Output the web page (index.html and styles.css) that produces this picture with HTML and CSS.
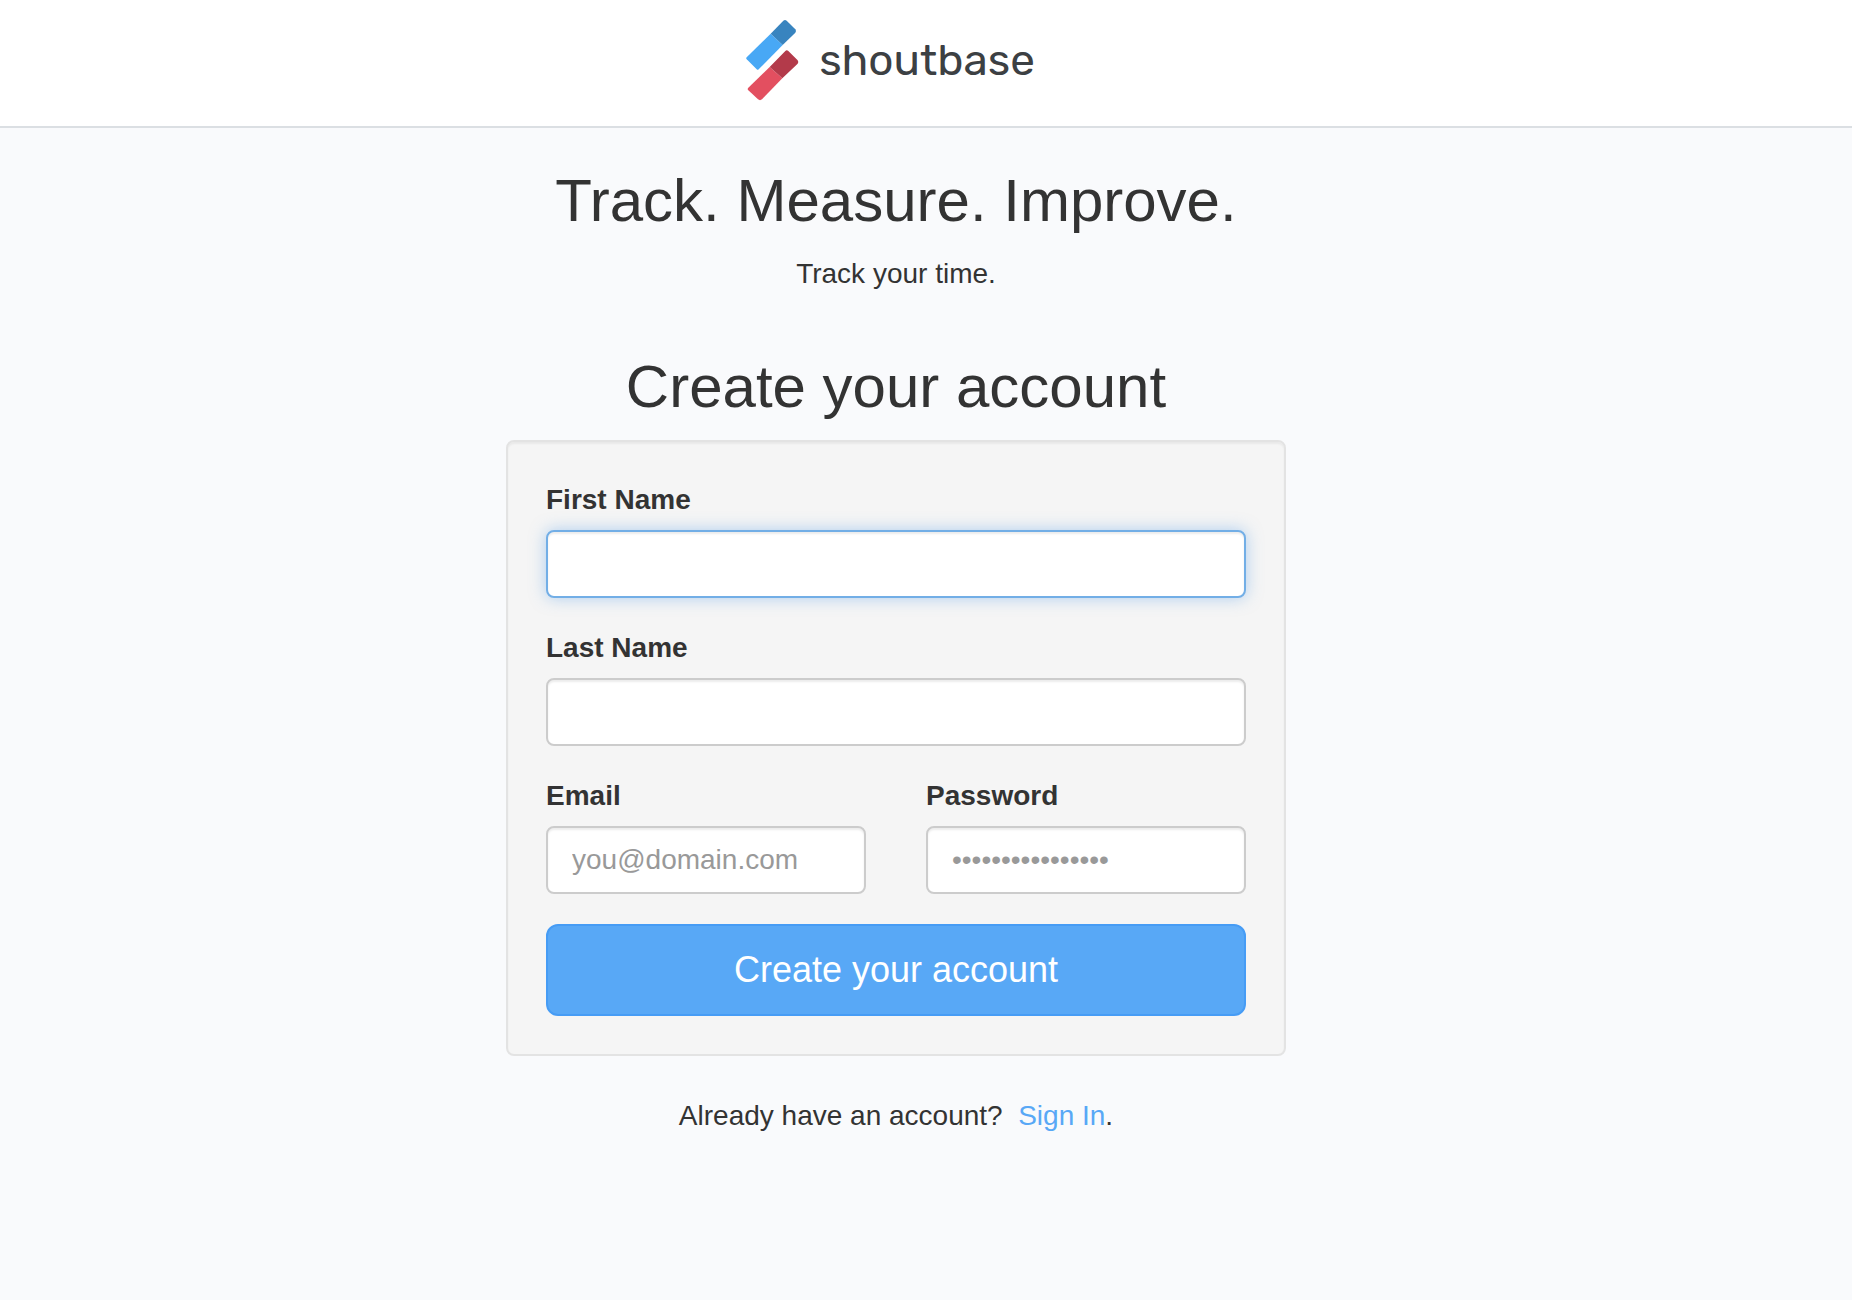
FILE: index.html
```html
<!DOCTYPE html>
<html lang="en">
  <head>
    <meta charset="utf-8">
    <meta name="viewport" content="width=device-width, initial-scale=1">
    <title>Shoutbase</title>
    <link rel="stylesheet" href="styles.css">
  </head>
  <body>
    <header class="navbar">
      <a href="#" class="brand">
        <svg class="brand-mark" viewBox="48 57 162 246" aria-hidden="true">
          <path fill="#48a8f5" d="M125 101 L53 172 Q50 175 53 178 L83 208 Q86 211 89 208 L161 135 Z" />
          <path fill="#3884bf" d="M125 101 L163 62 Q168 58 173 62 L199 88 Q203 93 199 98 L161 135 Z" />
          <path fill="#e34f60" d="M122 201 L58 263 Q54 267 58 271 L87 298 Q93 303 99 298 L160 235 Z" />
          <path fill="#b33a4a" d="M122 201 L169 153 Q173 148 178 153 L206 181 Q210 186 206 191 L160 235 Z" />
        </svg>
        <span class="brand-name">shoutbase</span>
      </a>
    </header>

    <main class="content">
      <h1>Track. Measure. Improve.</h1>
      <p>Track your time.</p>

      <section class="signup">
        <h2>Create your account</h2>
        <form class="well">
          <div class="form-group">
            <label for="first-name">First Name</label>
            <input type="text" id="first-name" class="form-control active">
          </div>
          <div class="form-group">
            <label for="last-name">Last Name</label>
            <input type="text" id="last-name" class="form-control">
          </div>
          <div class="form-row">
            <div class="form-group">
              <label for="email">Email</label>
              <input type="email" id="email" class="form-control" placeholder="you@domain.com">
            </div>
            <div class="form-group">
              <label for="password">Password</label>
              <input type="password" id="password" class="form-control" placeholder="••••••••••••••••">
            </div>
          </div>
          <button type="submit" class="btn">Create your account</button>
        </form>
        <p>Already have an account?&nbsp; <a href="#">Sign In</a>.</p>
      </section>
    </main>
  </body>
</html>
```

FILE: styles.css
```css
* {
    box-sizing: border-box;
}

body {
    margin: 0;
    background: #f9fafc;
    color: #333;
    font-family: "Helvetica Neue", Helvetica, "Liberation Sans", Arial, sans-serif;
    font-size: 28px;
    line-height: 40px;
}

h1, h2 {
    margin: 0 0 20px;
    font-size: 60px;
    font-weight: normal;
    line-height: 66px;
}

p {
    margin: 0;
}

a {
    color: #58a8f6;
    text-decoration: none;
}

/* Header */
.navbar {
    display: flex;
    justify-content: center;
    padding: 19px 72px 25px 0;
    background: #fff;
    border-bottom: 2px solid #dbdfe3;
}

.brand {
    display: flex;
    align-items: center;
    gap: 20px;
    color: #3c4043;
}

.brand-mark {
    width: 54px;
    height: 82px;
}

.brand-name {
    font-family: Rubik, Roboto, sans-serif;
    font-size: 44px;
}

/* Page */
.content {
    padding: 40px 60px 40px 0;
    text-align: center;
}

.signup {
    max-width: 780px;
    margin: 60px auto 0;
}

.well {
    margin-bottom: 40px;
    padding: 38px;
    background: #f5f5f5;
    border: 2px solid #e3e3e3;
    border-radius: 8px;
    box-shadow: inset 0 2px 2px rgba(0, 0, 0, 0.05);
    text-align: left;
}

/* Form */
.form-group {
    margin-bottom: 30px;
}

.form-row {
    display: grid;
    grid-template-columns: 1fr 1fr;
    column-gap: 60px;
}

label {
    display: block;
    margin-bottom: 10px;
    font-weight: bold;
}

.form-control {
    display: block;
    width: 100%;
    height: 68px;
    padding: 12px 24px;
    background: #fff;
    border: 2px solid #ccc;
    border-radius: 8px;
    box-shadow: inset 0 2px 2px rgba(0, 0, 0, 0.075);
    color: #555;
    font: inherit;
}

.form-control::placeholder {
    color: #999;
    opacity: 1;
}

.form-control:focus,
.form-control.active {
    border-color: #72aee6;
    outline: 0;
    box-shadow: inset 0 2px 2px rgba(0, 0, 0, 0.075), 0 0 16px rgba(102, 165, 233, 0.5);
}

.btn {
    display: block;
    width: 100%;
    padding: 20px 32px;
    background: #58a8f6;
    border: 2px solid #469cf5;
    border-radius: 12px;
    color: #fff;
    font-family: inherit;
    font-size: 36px;
    line-height: 48px;
    cursor: pointer;
}
```
